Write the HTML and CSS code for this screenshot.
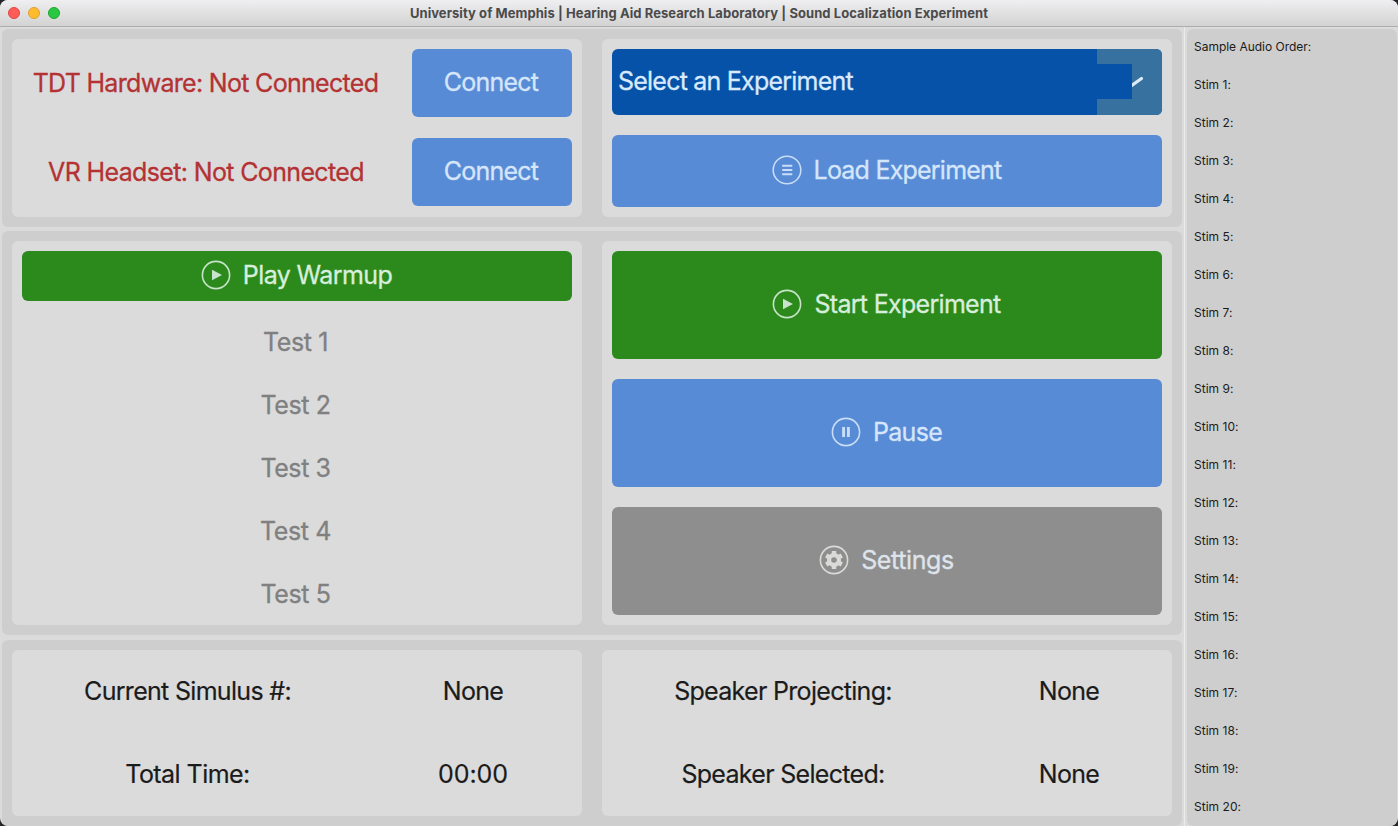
FILE: index.html
```html
<!DOCTYPE html>
<html lang="en">
<head>
<meta charset="utf-8">
<title>Sound Localization Experiment</title>
<link rel="stylesheet" href="styles.css">
</head>
<body>
<div class="window">
  <header class="titlebar">
    <div class="lights"><i class="light red"></i><i class="light yellow"></i><i class="light green"></i></div>
    <h1 class="title">University of Memphis | Hearing Aid Research Laboratory | Sound Localization Experiment</h1>
  </header>
  <div class="body">
    <main class="main">
      <section class="group top">
        <div class="card devices">
          <span class="status tdt">TDT Hardware: Not Connected</span><button class="btn blue connect">Connect</button>
          <span class="status vr">VR Headset: Not Connected</span><button class="btn blue connect">Connect</button>
        </div>
        <div class="card loader">
          <div class="select">
            <span class="select-label">Select an Experiment</span>
            <svg class="select-arrow" width="65" height="66" viewBox="0 0 65 66"><path d="M0 0H59Q65 0 65 6V60Q65 66 59 66H0Z" fill="#3771a0"/><path d="M26 30L35 36.2L44.5 29.5" fill="none" stroke="#dcebf7" stroke-width="3.2" stroke-linecap="round"/><path d="M0 15H35V50H0Z" fill="#0752a9"/></svg>
          </div>
          <button class="btn blue">
            <svg class="icon" viewBox="0 0 30 30"><circle cx="15" cy="15" r="13.8"/><path d="M10.9 10.7h8.6M10.9 15h8.6M10.9 19.3h8.6" stroke-width="2" stroke-linecap="round"/></svg>
            <span class="load">Load Experiment</span>
          </button>
        </div>
      </section>
      <section class="group middle">
        <div class="card tests">
          <button class="btn go">
            <svg class="icon" viewBox="0 0 30 30"><circle cx="15" cy="15" r="13.6"/><path class="solid" d="M11 9.8L21 15L11 20.2Z"/></svg>
            <span class="warmup">Play Warmup</span>
          </button>
          <ul class="test-list"><li>Test 1</li><li>Test 2</li><li>Test 3</li><li>Test 4</li><li>Test 5</li></ul>
        </div>
        <div class="card controls">
          <button class="btn go">
            <svg class="icon" viewBox="0 0 30 30"><circle cx="15" cy="15" r="13.6"/><path class="solid" d="M11 9.8L21 15L11 20.2Z"/></svg>
            <span class="start">Start Experiment</span>
          </button>
          <button class="btn blue">
            <svg class="icon" viewBox="0 0 30 30"><circle cx="15" cy="15" r="13.6"/><path d="M12.6 10v10M17.4 10v10" stroke-width="2.9"/></svg>
            <span class="pause">Pause</span>
          </button>
          <button class="btn gray">
            <svg class="icon gear" viewBox="0 0 30 30"><circle cx="15" cy="15" r="13.6"/><circle cx="15" cy="15" r="4.9" stroke-width="4.2"/><path d="M15 6V9M15 21V24M7.2 10.5L9.8 12M20.2 18L22.8 19.5M7.2 19.5L9.8 18M20.2 12L22.8 10.5" stroke-width="4.4"/></svg>
            <span class="settings">Settings</span>
          </button>
        </div>
      </section>
      <section class="group bottom">
        <div class="card stats stimulus">
          <span class="current">Current Simulus #:</span><span class="none">None</span>
          <span class="total">Total Time:</span><span class="clock">00:00</span>
        </div>
        <div class="card stats speaker">
          <span class="projecting">Speaker Projecting:</span><span class="none">None</span>
          <span class="selected">Speaker Selected:</span><span class="none">None</span>
        </div>
      </section>
    </main>
    <aside class="sidebar">
      <ul class="stims">
        <li class="heading">Sample Audio Order:</li>
        <li>Stim 1:</li><li>Stim 2:</li><li>Stim 3:</li><li>Stim 4:</li><li>Stim 5:</li>
        <li>Stim 6:</li><li>Stim 7:</li><li>Stim 8:</li><li>Stim 9:</li><li>Stim 10:</li>
        <li>Stim 11:</li><li>Stim 12:</li><li>Stim 13:</li><li>Stim 14:</li><li>Stim 15:</li>
        <li>Stim 16:</li><li>Stim 17:</li><li>Stim 18:</li><li>Stim 19:</li><li>Stim 20:</li>
      </ul>
    </aside>
  </div>
</div>
</body>
</html>
```
FILE: styles.css
```css
* { box-sizing: border-box; }
body { margin: 0; background: #25242b; font-family: Inter, "Liberation Sans", sans-serif; color: #1b1b1b; overflow: hidden; }
ul { list-style: none; margin: 0; padding: 0; }
.window { width: 1398px; height: 826px; display: flex; flex-direction: column; border-radius: 8px; overflow: hidden; background: #dbdbdb; }

.titlebar { height: 27px; flex: none; display: grid; grid-template-columns: 70px 1fr 70px; align-items: center; background: linear-gradient(#efeef0, #d3d3d3); border-bottom: 1px solid #adadad; }
.lights { display: flex; gap: 8px; padding-left: 8px; }
.light { width: 12px; height: 12px; border-radius: 50%; border: 1px solid; }
.red { background: #fc5b57; border-color: #df4744; }
.yellow { background: #fdbc2e; border-color: #dea032; }
.green { background: #28c840; border-color: #1fa62f; }
.title { margin: 0; font-size: 13px; line-height: 26px; font-weight: 700; text-align: center; color: #4b4a4b; white-space: nowrap; letter-spacing: 0.065px; }

.body { flex: 1; display: flex; padding-top: 2px; min-height: 0; }
.main { width: 1184px; padding: 0 2px; display: flex; flex-direction: column; }
.group { display: grid; grid-template-columns: 570px 570px; grid-template-rows: 100%; column-gap: 20px; padding: 10px; border-radius: 6px; background: #cecece; }
.top { height: 198px; margin-bottom: 4px; }
.middle { height: 404px; margin-bottom: 5px; }
.bottom { height: 186px; }
.card { background: #dbdbdb; border-radius: 6px; min-height: 0; }

.btn { font: inherit; font-size: 25px; line-height: 30px; border: 0; padding: 0 1px 2px 0; border-radius: 6px; display: flex; align-items: center; justify-content: center; gap: 12px; color: #dceaf8; white-space: nowrap; letter-spacing: -0.7px; -webkit-text-stroke: 0.3px currentColor; }
.connect { padding: 0 2px 2px 0; letter-spacing: -0.75px; }
.blue { background: #588bd5; color: #d5e6fb; }
.go { background: #2b8a1b; color: #d8eedd; }
.gray { background: #8e8e8e; color: #dfe4eb; }
.load { letter-spacing: -0.78px; }
.warmup { letter-spacing: -0.6px; }
.settings { letter-spacing: -0.4px; }
.icon { width: 30px; height: 30px; fill: none; stroke: currentColor; stroke-width: 1.6; flex: none; opacity: 0.9; }
.gear { color: #e3e3e1; }
.solid { fill: currentColor; stroke: none; }

.devices { padding: 10px; display: grid; grid-template-columns: 370px 160px; grid-template-rows: 68px 68px; column-gap: 20px; row-gap: 21px; align-items: stretch; font-size: 25px; }
.status { color: #b43233; display: flex; align-items: center; justify-content: center; padding-right: 3px; white-space: nowrap; letter-spacing: -0.69px; -webkit-text-stroke: 0.3px currentColor; }
.vr { padding-right: 2px; letter-spacing: -0.64px; }
.loader { padding: 10px; display: grid; grid-template-rows: 66px 72px; row-gap: 20px; }
.select { display: flex; align-items: center; justify-content: space-between; padding-left: 6px; background: #0752a9; border-radius: 6px; color: #d9eafc; font-size: 25px; letter-spacing: -0.78px; -webkit-text-stroke: 0.3px currentColor; }
.select-label { padding-bottom: 2px; }
.select-arrow { display: block; }

.tests { padding: 10px; }
.tests .btn { width: 550px; height: 50px; }
.test-list { margin-top: 10px; padding-right: 3px; }
.test-list li { height: 63px; line-height: 62px; text-align: center; font-size: 25px; color: #808080; letter-spacing: -0.4px; -webkit-text-stroke: 0.3px currentColor; }
.controls { padding: 10px; display: grid; grid-template-rows: repeat(3, 108px); row-gap: 20px; }

.stats { display: grid; grid-template-rows: 82px 83px; align-items: center; justify-items: center; font-size: 25px; letter-spacing: -0.69px; white-space: nowrap; -webkit-text-stroke: 0.2px currentColor; }
.none { letter-spacing: -0.7px; }
.total { letter-spacing: -0.55px; }
.clock { letter-spacing: -0.1px; }
.stimulus { grid-template-columns: 351px 220px; }
.speaker { grid-template-columns: 362px 210px; }

.sidebar { flex: 1; margin-top: -2px; padding: 2px 1px 0 2px; border-left: 1px solid #ebebeb; }
.stims { height: 797px; padding: 0 7px; border-radius: 6px; background: #cecece; font-size: 12px; letter-spacing: 0.03px; }
.stims li { height: 38px; line-height: 38px; }
.stims .heading { height: 37px; line-height: 36px; letter-spacing: -0.02px; }
```
